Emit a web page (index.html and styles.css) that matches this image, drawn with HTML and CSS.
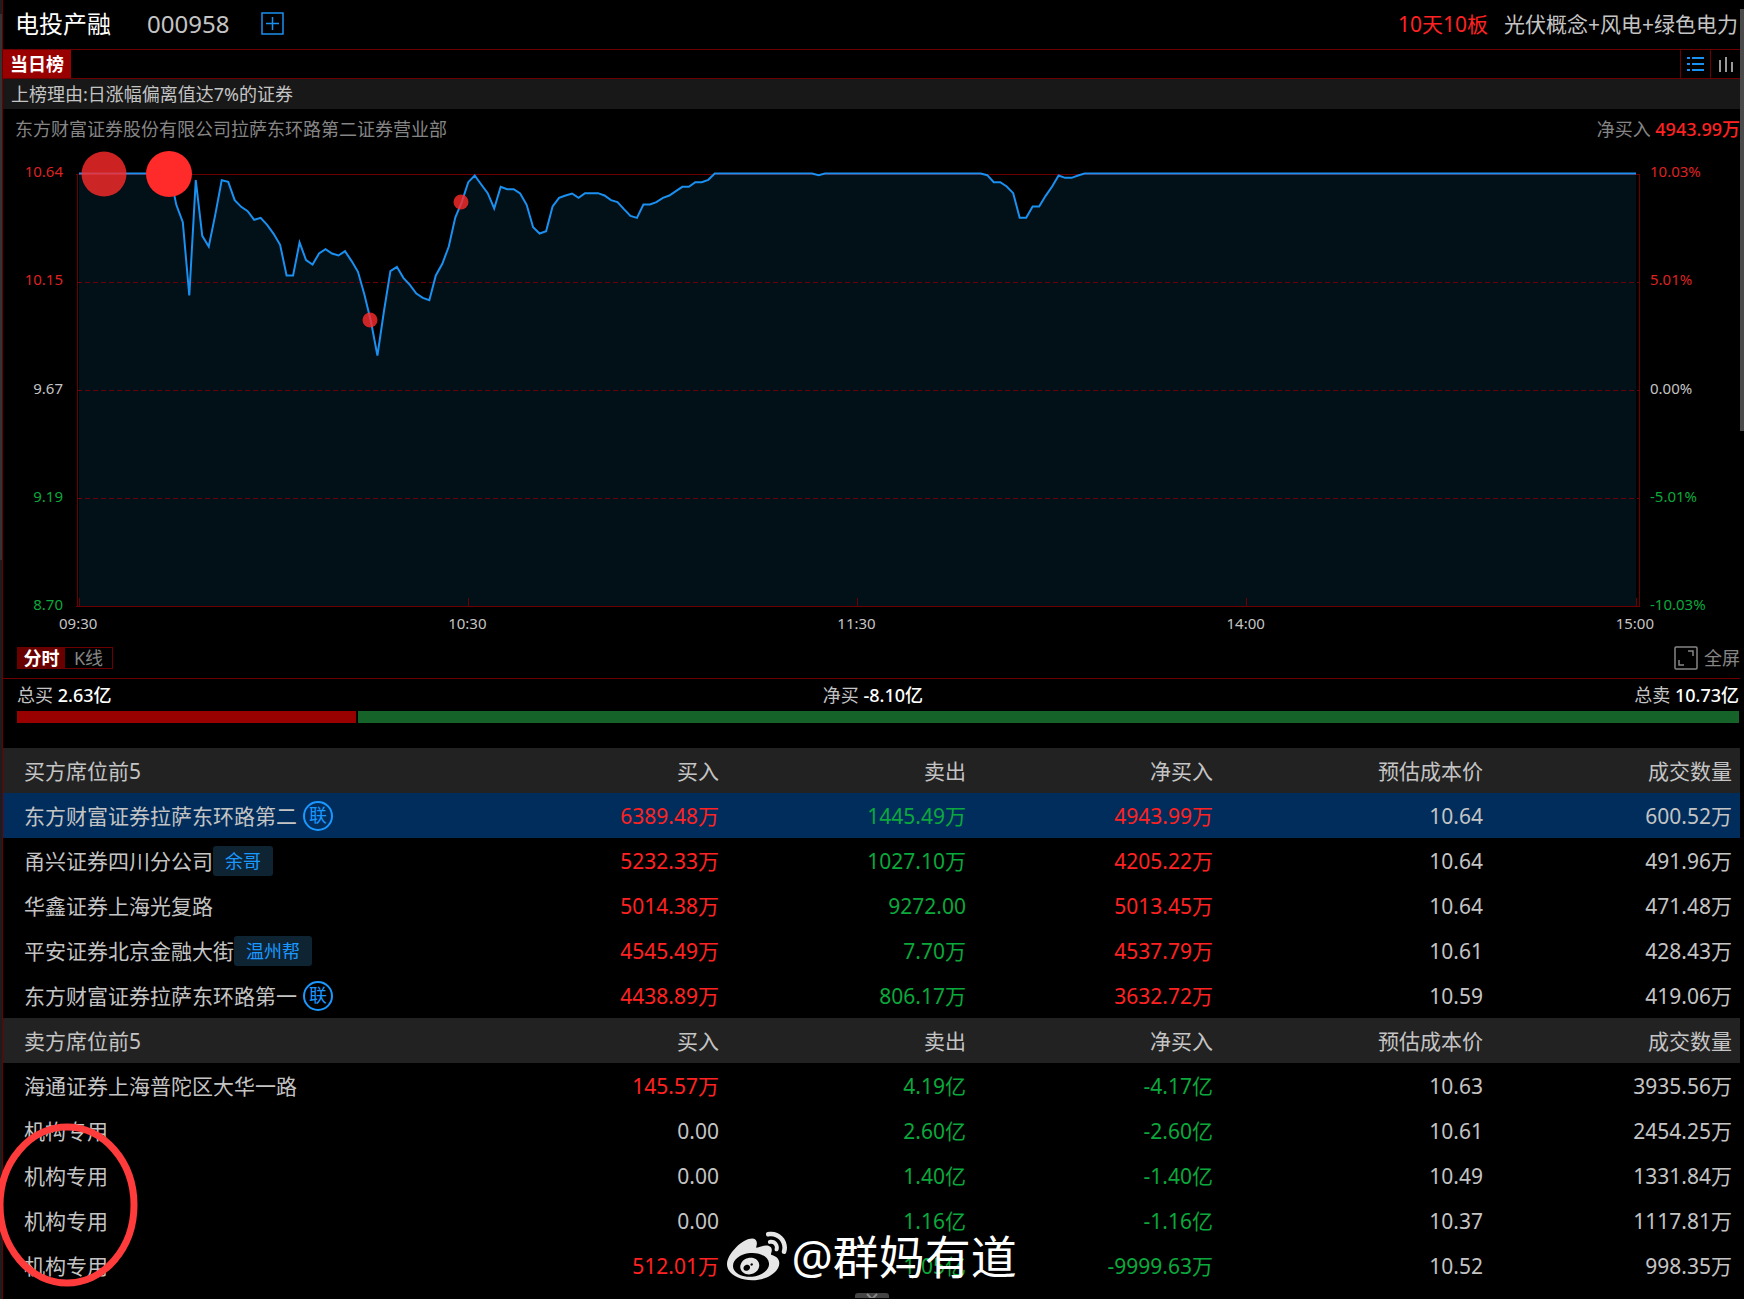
FILE: index.html
```html
<!DOCTYPE html>
<html lang="zh-CN">
<head>
<meta charset="utf-8">
<meta name="viewport" content="width=device-width, initial-scale=1">
<title>电投产融 000958 龙虎榜</title>
<link rel="stylesheet" href="styles.css">
</head>
<body>
<div class="app">
  <div class="gutter gutter-left"><span class="thumb thumb-left"></span></div>
  <main class="panel">
    <header class="stock">
      <h1 class="stock-name">电投产融</h1>
      <span class="stock-code">000958</span>
      <button class="icon-btn" type="button" aria-label="加自选">
        <svg width="23" height="23" viewBox="0 0 23 23"><path d="M1 1H22V22H1ZM11.500 5V18M5 11.500H18" fill="none" stroke="#1a90f0" stroke-width="1.500"/></svg>
      </button>
      <span class="streak">10天10板</span>
      <span class="concepts">光伏概念+风电+绿色电力</span>
    </header>

    <nav class="tabs">
      <button class="tab" type="button">当日榜</button>
      <div class="views">
        <button class="view" type="button" aria-label="列表">
          <svg width="18" height="16" viewBox="0 0 18 16"><path d="M0 2H3M0 8H3M0 14H3M5 2H17M5 8H17M5 14H17" stroke="#1a90f0" stroke-width="2"/></svg>
        </button>
        <button class="view" type="button" aria-label="图表">
          <svg width="16" height="16" viewBox="0 0 16 16"><path d="M2 4V16M8 1V16M14 6V16" stroke="#999" stroke-width="2"/></svg>
        </button>
      </div>
    </nav>

    <p class="reason">上榜理由:日涨幅偏离值达7%的证券</p>

    <div class="seat-line">
      <span>东方财富证券股份有限公司拉萨东环路第二证券营业部</span>
      <span>净买入 <b class="up">4943.99万</b></span>
    </div>

    <section class="chart">
      <div class="axis axis-price">
        <span class="axis-up">10.64</span><span class="axis-up">10.15</span><span>9.67</span><span class="axis-down">9.19</span><span class="axis-down">8.70</span>
      </div>
      <svg class="plot" viewBox="0 0 1564 433">
        <g transform="translate(3 0) scale(6.4875 .33333)">
          <path fill="#021018" d="M0 1296V0H14L15 94 16 146 17 366 18 20 19 187 20 219 21 124 22 20 23 25 24 80 25 100 26 113 27 139 28 133 29 154 30 181 31 214 32 306 33 306 34 207 35 260 36 273 37 240 38 227 39 240 40 246 41 233 42 262 43 295 44 364 45 444 46 546 47 414 48 293 49 280 50 313 51 334 52 360 53 373 54 380 55 306 56 271 57 219 58 132 59 86 60 26 61 6 62 33 63 59 64 105 65 40 66 47 67 47 68 60 69 94 70 161 71 180 72 173 73 99 74 73 75 66 76 60 77 73 78 59 79 59 80 59 81 66 82 80 83 86 84 107 85 127 86 133 87 93 88 93 89 86 90 73 91 66 92 53 93 40 94 40 95 26 96 26 97 19 98 0 113 0 114 5 115 0 139 0 140 5 141 26 142 26 143 39 144 59 145 133 146 133 147 99 148 99 149 67 150 39 151 6 152 13 153 13 154 6 155 0 240 0V1296Z"/>
        </g>
        <path d="M0 0H1564M1 0V432M1563 0V432M0 432H1564M3 424V432M392 424V432M781 424V432M1170 424V432M1560 424V432" fill="none" stroke="#6c0000" shape-rendering="crispEdges"/>
        <path d="M1 108H1563M1 216H1563M1 324H1563" fill="none" stroke="#6c0008" stroke-dasharray="5 3" shape-rendering="crispEdges"/>
        <g transform="translate(3 -.5) scale(6.4875 .33333)">
          <path class="price-line" d="M0 0H14L15 94 16 146 17 366 18 20 19 187 20 219 21 124 22 20 23 25 24 80 25 100 26 113 27 139 28 133 29 154 30 181 31 214 32 306 33 306 34 207 35 260 36 273 37 240 38 227 39 240 40 246 41 233 42 262 43 295 44 364 45 444 46 546 47 414 48 293 49 280 50 313 51 334 52 360 53 373 54 380 55 306 56 271 57 219 58 132 59 86 60 26 61 6 62 33 63 59 64 105 65 40 66 47 67 47 68 60 69 94 70 161 71 180 72 173 73 99 74 73 75 66 76 60 77 73 78 59 79 59 80 59 81 66 82 80 83 86 84 107 85 127 86 133 87 93 88 93 89 86 90 73 91 66 92 53 93 40 94 40 95 26 96 26 97 19 98 0 113 0 114 5 115 0 139 0 140 5 141 26 142 26 143 39 144 59 145 133 146 133 147 99 148 99 149 67 150 39 151 6 152 13 153 13 154 6 155 0 240 0"/>
        </g>
        <g fill="#ff2a2a">
          <circle cx="28" cy="0" r="22.500" opacity=".8"/>
          <circle cx="93" cy="0" r="23"/>
          <circle cx="294" cy="146" r="7.500" opacity=".8"/>
          <circle cx="385" cy="28" r="7.500" opacity=".8"/>
        </g>
      </svg>
      <div class="axis axis-percent">
        <span class="axis-up">10.03%</span><span class="axis-up">5.01%</span><span>0.00%</span><span class="axis-down">-5.01%</span><span class="axis-down">-10.03%</span>
      </div>
      <div class="axis-time">
        <span>09:30</span><span>10:30</span><span>11:30</span><span>14:00</span><span>15:00</span>
      </div>
    </section>

    <div class="chart-tools">
      <div class="modes">
        <button class="mode mode-active" type="button">分时</button>
        <button class="mode" type="button">K线</button>
      </div>
      <button class="full" type="button">
        <svg width="24" height="24" viewBox="0 0 24 24" fill="none" stroke="#858585"><rect x="1" y="1" width="22" height="22" rx="1" stroke-width="1.500"/><path d="M14 5H19V10M5 14V19H10" stroke-width="1.500"/></svg>
        全屏
      </button>
    </div>

    <section class="totals">
      <div class="totals-text">
        <span>总买 <b>2.63亿</b></span>
        <span>净买 <b>-8.10亿</b></span>
        <span>总卖 <b>10.73亿</b></span>
      </div>
      <div class="bar">
        <span class="bar-buy" style="flex-grow:263"></span>
        <span class="bar-sell" style="flex-grow:1073"></span>
      </div>
    </section>

    <table class="seats">
      <colgroup><col><col class="c-mid"><col class="c-mid"><col class="c-mid"><col class="c-cost"><col class="c-last"></colgroup>
      <thead><tr><th>买方席位前5</th><th>买入</th><th>卖出</th><th>净买入</th><th>预估成本价</th><th>成交数量</th></tr></thead>
      <tbody>
        <tr class="selected"><td><div class="seat">东方财富证券拉萨东环路第二<span class="link-badge">联</span></div></td><td class="up">6389.48万</td><td class="down">1445.49万</td><td class="up">4943.99万</td><td>10.64</td><td>600.52万</td></tr>
        <tr><td><div class="seat">甬兴证券四川分公司<span class="tag">余哥</span></div></td><td class="up">5232.33万</td><td class="down">1027.10万</td><td class="up">4205.22万</td><td>10.64</td><td>491.96万</td></tr>
        <tr><td>华鑫证券上海光复路</td><td class="up">5014.38万</td><td class="down">9272.00</td><td class="up">5013.45万</td><td>10.64</td><td>471.48万</td></tr>
        <tr><td><div class="seat">平安证券北京金融大街<span class="tag">温州帮</span></div></td><td class="up">4545.49万</td><td class="down">7.70万</td><td class="up">4537.79万</td><td>10.61</td><td>428.43万</td></tr>
        <tr><td><div class="seat">东方财富证券拉萨东环路第一<span class="link-badge">联</span></div></td><td class="up">4438.89万</td><td class="down">806.17万</td><td class="up">3632.72万</td><td>10.59</td><td>419.06万</td></tr>
      </tbody>
    </table>

    <table class="seats">
      <colgroup><col><col class="c-mid"><col class="c-mid"><col class="c-mid"><col class="c-cost"><col class="c-last"></colgroup>
      <thead><tr><th>卖方席位前5</th><th>买入</th><th>卖出</th><th>净买入</th><th>预估成本价</th><th>成交数量</th></tr></thead>
      <tbody>
        <tr><td>海通证券上海普陀区大华一路</td><td class="up">145.57万</td><td class="down">4.19亿</td><td class="down">-4.17亿</td><td>10.63</td><td>3935.56万</td></tr>
        <tr><td>机构专用</td><td>0.00</td><td class="down">2.60亿</td><td class="down">-2.60亿</td><td>10.61</td><td>2454.25万</td></tr>
        <tr><td>机构专用</td><td>0.00</td><td class="down">1.40亿</td><td class="down">-1.40亿</td><td>10.49</td><td>1331.84万</td></tr>
        <tr><td>机构专用</td><td>0.00</td><td class="down">1.16亿</td><td class="down">-1.16亿</td><td>10.37</td><td>1117.81万</td></tr>
        <tr><td>机构专用</td><td class="up">512.01万</td><td class="down">1.05亿</td><td class="down">-9999.63万</td><td>10.52</td><td>998.35万</td></tr>
      </tbody>
    </table>

    <button class="expand" type="button" aria-label="展开">
      <svg width="14" height="8" viewBox="0 0 14 8"><path d="M2 1L7 6L12 1" fill="none" stroke="#888" stroke-width="2"/></svg>
    </button>

    <svg class="marker" width="142" height="164" viewBox="0 0 142 164"><ellipse cx="71" cy="82" rx="67" ry="78" fill="none" stroke="#ff3b3b" stroke-width="7"/></svg>

    <div class="watermark">
      <svg width="60" height="50" viewBox="0 31 512 417" fill="#e6e6e6"><path d="M407 177.600c7.600-24-13.400-46.800-37.400-41.700-22 4.800-28.800-28.100-7.100-32.800 50.100-10.900 92.300 37.100 76.500 84.800-6.800 21.200-38.800 10.800-32-10.300zM214.800 446.700C108.500 446.700 0 395.300 0 310.400c0-44.300 28-95.400 76.300-143.700C176 67 279.500 65.800 249.900 161c-4 13.100 12.300 5.700 12.300 6 79.500-33.600 140.500-16.800 114 51.400-3.700 9.400 1.100 10.900 8.300 13.100 135.700 42.300 34.800 215.200-169.700 215.200zm143.700-146.300c-5.400-55.700-78.500-94-163.400-85.700-84.800 8.600-148.800 60.300-143.400 116s78.500 94 163.400 85.700c84.800-8.600 148.800-60.300 143.400-116zM347.900 35.100c-25.900 5.600-16.800 43.700 8.300 38.300 72.300-15.200 134.800 52.800 111.700 124-7.400 24.200 29.100 37 37.400 12 31.900-99.800-55.100-195.900-157.400-174.300zm-78.500 311c-17.100 38.800-66.800 60-109.100 46.300-40.800-13.100-58-53.400-40.300-89.700 17.700-35.400 63.100-55.400 103.400-45.100 42 10.800 63.100 50.200 46 88.500zm-86.300-30c-12.900-5.400-30 .3-38 12.900-8.300 12.900-4.300 28 8.600 34 13.100 6 30.800.3 39.100-12.900 8-13.100 3.700-28.300-9.700-34zm32.600-13.400c-5.100-1.700-11.400.6-14.300 5.400-2.900 5.100-1.400 10.600 3.700 12.900 5.100 2 11.700-.3 14.600-5.400 2.800-5.200 1.100-10.900-4-12.900z"/></svg>
      <span>@群妈有道</span>
    </div>
  </main>
  <div class="gutter gutter-right"><span class="thumb thumb-right"></span></div>
</div>
</body>
</html>
```
FILE: styles.css
```css
* {
  box-sizing: border-box;
}

body {
  margin: 0;
  background: #000;
  color: #c4c4c4;
  font-family: "Noto Sans", "Noto Sans CJK SC", sans-serif;
  font-size: 18px;
}

button {
  margin: 0;
  padding: 0;
  border: 0;
  background: none;
  color: inherit;
  font: inherit;
  cursor: pointer;
}

svg {
  display: block;
}

.up {
  color: #ff2222;
}

.down {
  color: #0ba83c;
}

.app {
  display: flex;
  min-height: 100vh;
}

.gutter {
  flex: none;
}

.gutter-left {
  width: 2px;
  padding-top: 14px;
  background: #1c1c1c;
}

.gutter-right {
  width: 4px;
  padding-top: 9px;
}

.thumb {
  display: block;
}

.thumb-left {
  height: 546px;
  background: #333;
}

.thumb-right {
  height: 422px;
  background: #4a4a4a;
}

.panel {
  position: relative;
  flex: 1;
  min-width: 0;
  border-left: 1px solid #6c0000;
}

/* Stock header */
.stock {
  display: flex;
  align-items: center;
  height: 49px;
  padding: 0 0 2px 12px;
  line-height: 30px;
  white-space: nowrap;
}

.stock-name {
  margin: 0 36px 0 0;
  color: #fff;
  font-size: 24px;
  font-weight: 400;
}

.stock-code {
  margin-right: 32px;
  font-size: 24px;
}

.streak {
  margin: 0 16px 0 auto;
  color: #ff2222;
  font-size: 21px;
}

.concepts {
  padding-right: 2px;
  font-size: 21px;
}

.tabs {
  display: flex;
  justify-content: space-between;
  height: 30px;
  border-top: 1px solid #6c0000;
  border-bottom: 1px solid #6c0000;
}

.tab {
  width: 68px;
  background: #990000;
  color: #fff;
  font-weight: 700;
  line-height: 28px;
}

.views {
  display: flex;
}

.view {
  display: flex;
  align-items: center;
  justify-content: center;
  width: 30px;
  border-left: 1px solid #6c0000;
}

.reason {
  margin: 0;
  padding-left: 8px;
  background: #181818;
  line-height: 30px;
}

.seat-line {
  display: flex;
  justify-content: space-between;
  padding-left: 12px;
  color: #858585;
  line-height: 40px;
}

.seat-line b {
  font-weight: 500;
}

/* Intraday chart */
.chart {
  display: grid;
  grid-template-columns: 60px 1fr 90px;
  column-gap: 10px;
  margin: 25px 0 0 3px;
  font-size: 15px;
}

.axis {
  display: flex;
  flex-direction: column;
  justify-content: space-between;
  margin: -13px 0 -7px;
  line-height: 20px;
}

.axis-price {
  padding-right: 3px;
  text-align: right;
}

.axis-up {
  color: #dd2222;
}

.axis-down {
  color: #0ba83c;
}

.plot {
  width: 100%;
  overflow: visible;
}

.price-line {
  fill: none;
  stroke: #1a90f0;
  stroke-width: 2;
  vector-effect: non-scaling-stroke;
}

.axis-time {
  display: flex;
  grid-column: 1 / -1;
  justify-content: space-between;
  margin: 5px 86px 0 53px;
  line-height: 22px;
}

.chart-tools {
  display: flex;
  align-items: center;
  justify-content: space-between;
  height: 45px;
  padding: 3px 0 0 14px;
  border-bottom: 1px solid #6c0000;
}

.modes {
  display: flex;
  border: 1px solid #6c0000;
}

.mode {
  width: 47px;
  color: #858585;
  line-height: 20px;
}

.mode-active {
  background: #690000;
  color: #fff;
  font-weight: 700;
}

.full {
  display: flex;
  align-items: center;
  gap: 6px;
  color: #858585;
  line-height: 24px;
}

/* Buy and sell totals */
.totals {
  padding: 0 1px 25px 14px;
}

.totals-text {
  display: flex;
  justify-content: space-between;
  line-height: 32px;
}

.totals-text b {
  color: #fff;
  font-weight: 500;
}

.bar {
  display: flex;
  gap: 2px;
  height: 12px;
}

.bar-buy {
  background: #990000;
}

.bar-sell {
  background: #156329;
}

/* Seat tables */
.seats {
  width: 100%;
  border-collapse: collapse;
  table-layout: fixed;
  font-size: 21px;
  line-height: 28px;
}

.c-mid {
  width: 247px;
}

.c-cost {
  width: 270px;
}

.c-last {
  width: 249px;
}

.seats th,
.seats td {
  height: 45px;
  padding: 0 8px 0 0;
  font-weight: 400;
  text-align: right;
  white-space: nowrap;
}

.seats th:first-child,
.seats td:first-child {
  padding-left: 21px;
  text-align: left;
}

.seats th {
  background: #222;
}

.selected {
  background: #002d5c;
}

.seat {
  display: flex;
  align-items: center;
}

.link-badge {
  width: 30px;
  height: 30px;
  margin-left: 6px;
  border: 2px solid #1a98ff;
  border-radius: 50%;
  color: #1a98ff;
  font-size: 18px;
  line-height: 25px;
  text-align: center;
}

.tag {
  padding: 0 12px;
  border-radius: 3px;
  background: #0e2433;
  color: #1a98ff;
  font-size: 18px;
  line-height: 30px;
}

.expand {
  display: flex;
  justify-content: center;
  width: 34px;
  height: 5px;
  margin: 5px auto 0;
  overflow: hidden;
  border-radius: 3px 3px 0 0;
  background: #444;
}

/* Hand-drawn ring and signature laid over the table */
.marker {
  position: absolute;
  bottom: 12px;
  left: -7px;
  pointer-events: none;
}

.watermark {
  position: absolute;
  bottom: 13px;
  left: 50%;
  display: flex;
  align-items: center;
  gap: 5px;
  height: 60px;
  margin-left: -145px;
  color: #fff;
  font-size: 46px;
  line-height: 60px;
  white-space: nowrap;
  pointer-events: none;
}
```
